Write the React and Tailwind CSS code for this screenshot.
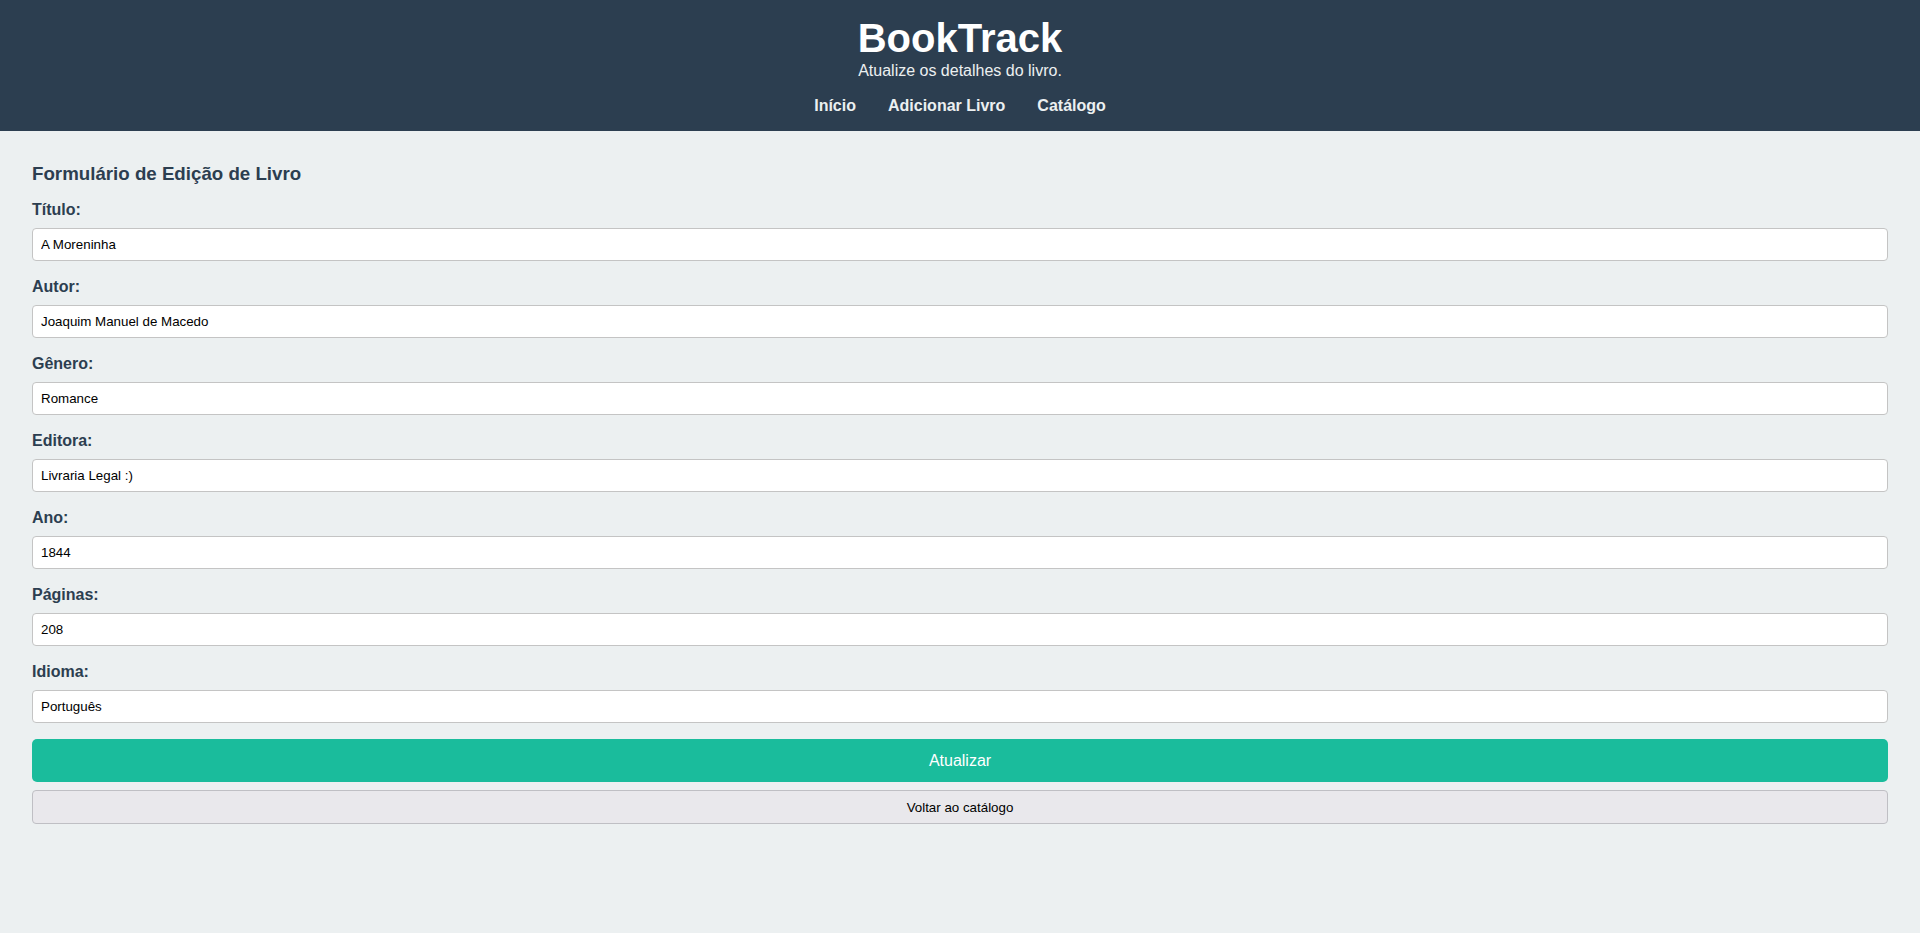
import React, { useState } from 'react';

const fields = [
	{ name: 'titulo', label: 'Título:', value: 'A Moreninha' },
	{ name: 'autor', label: 'Autor:', value: 'Joaquim Manuel de Macedo' },
	{ name: 'genero', label: 'Gênero:', value: 'Romance' },
	{ name: 'editora', label: 'Editora:', value: 'Livraria Legal :)' },
	{ name: 'ano', label: 'Ano:', value: '1844' },
	{ name: 'paginas', label: 'Páginas:', value: '208' },
	{ name: 'idioma', label: 'Idioma:', value: 'Português' },
];

function App() {
	// Form state
	const [book, setBook] = useState(
		fields.reduce((acc, f) => ({ ...acc, [f.name]: f.value }), {})
	);

	const handleChange = (e) => {
		setBook((prev) => ({ ...prev, [e.target.name]: e.target.value }));
	};

	return (
		<div className="min-h-[933px] bg-[#ecf0f1] font-['Liberation_Sans',Arial,sans-serif]">
			{/* Header */}
			<header className="bg-[#2c3e50] pt-[15px] pb-[16px] text-center text-[#ecf0f1]">
				<h1 className="text-[40px] font-bold leading-[46px] text-white">
					BookTrack
				</h1>
				<p className="mt-[1px] text-[16px] leading-[18px]">Atualize os detalhes do livro.</p>
				<nav className="mt-[17px] flex justify-center gap-[32px] text-[16px] font-bold leading-[18px]">
					<a href="#">Início</a>
					<a href="#">Adicionar Livro</a>
					<a href="#">Catálogo</a>
				</nav>
			</header>

			{/* Edit form */}
			<main className="px-8 pt-8">
				<h3 className="mb-[16px] text-[18.72px] font-bold leading-[22px] text-[#2c3e50]">
					Formulário de Edição de Livro
				</h3>
				<form onSubmit={(e) => e.preventDefault()}>
					{fields.map((f, i) => (
						<div key={f.name}>
							<label
								htmlFor={f.name}
								className="mb-[9px] block text-[16px] font-bold leading-[18px] text-[#2c3e50]">
								{f.label}
							</label>
							<input
								id={f.name}
								name={f.name}
								value={book[f.name]}
								onChange={handleChange}
								className={`block h-[33px] w-full rounded-[4px] border border-[#c4c4c4] bg-white px-2 text-[13.33px] text-black outline-none ${
									i === fields.length - 1 ? 'mb-[16px]' : 'mb-[17px]'
								}`}
							/>
						</div>
					))}
					<button
						type="submit"
						className="block h-[43px] w-full rounded-[5px] bg-[#1abc9c] text-[16px] text-white">
						Atualizar
					</button>
					<button
						type="button"
						className="mt-2 block h-[34px] w-full rounded-[4px] border border-[#bfbfc4] bg-[#e9e8ec] pt-[2px] text-[13.33px] text-black">
						Voltar ao catálogo
					</button>
				</form>
			</main>
		</div>
	);
}

export default App;
